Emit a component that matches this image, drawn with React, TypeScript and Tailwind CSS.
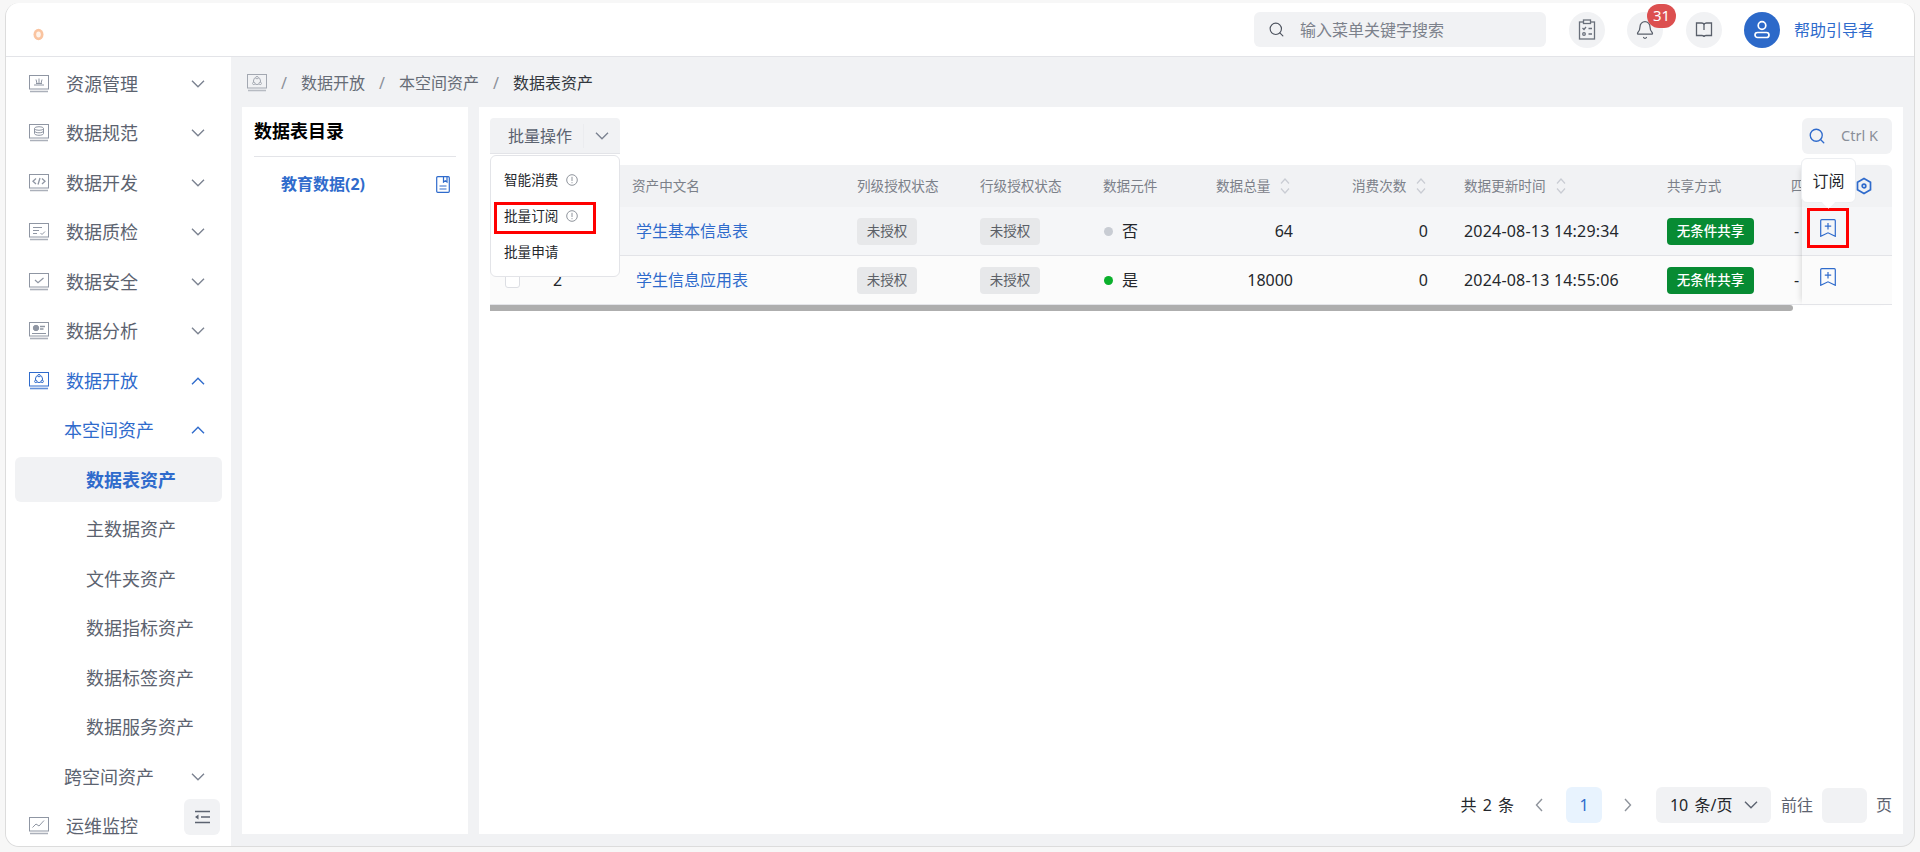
import { Bell, Search } from "lucide-react";

const BLUE = "#2f6bcc";

function Chevron({ up = false, color = "#7d8492" }: { up?: boolean; color?: string }) {
  return (
    <svg width="14" height="8" viewBox="0 0 14 8" fill="none" stroke={color} strokeWidth="1.4">
      <path d={up ? "M1 7.2 7 1.2l6 6" : "M1 .8l6 6 6-6"} />
    </svg>
  );
}

// small monitor shaped menu icons, the inner glyph differs per entry
function NavIcon({ name, color = "#8f96a3" }: { name: string; color?: string }) {
  return (
    <svg width="20" height="20" viewBox="0 0 20 20" fill="none" stroke={color} strokeWidth="1">
      <rect x=".5" y="1.5" width="19" height="13.5" />
      <path d="M1 17.5h18" strokeWidth="1.6" opacity=".75" />
      {name === "res" && <path d="M5 11h10M7 9.5h6M10 4.5v5M7 5.5l1 4M13 5.5l-1 4" />}
      {name === "std" && (
        <>
          <ellipse cx="10" cy="5.5" rx="4.5" ry="1.8" />
          <path d="M5.5 5.5v5c0 1 2 1.8 4.5 1.8s4.5-.8 4.5-1.8v-5M5.5 8c0 1 2 1.8 4.5 1.8s4.500-.8 4.500-1.800" />
        </>
      )}
      {name === "dev" && <path d="M7 5.5 4 8.200l3 2.700M13 5.5l3 2.700-3 2.700M11 5l-2 6.500" strokeWidth="1.3" />}
      {name === "qa" && <path d="M4 5.5h9M4 8.5h6M4 11.5h4M11.5 11l1.5 1.500 3-3" />}
      {name === "sec" && <path d="m6 8 3 2.800L14.500 6" strokeWidth="1.2" />}
      {name === "ana" && (
        <>
          <circle cx="7" cy="7" r="2.7" fill={color} />
          <path d="M11 5.5h5M11 8h3.500" strokeWidth="1.6" />
          <path d="M3 12.5h14" />
        </>
      )}
      {name === "open" && (
        <>
          <circle cx="10" cy="8" r="3.6" />
          <circle cx="10" cy="4.6" r="1.2" fill="#fff" />
          <circle cx="6.8" cy="10.4" r="1.2" fill="#fff" />
          <circle cx="13.2" cy="10.4" r="1.2" fill="#fff" />
        </>
      )}
      {name === "mon" && <path d="m3.5 11.5 3.500-3.500 3 2 5-5.500" />}
    </svg>
  );
}

function NavRow({
  label,
  icon,
  level = 1,
  open,
  active,
  blue,
}: {
  label: string;
  icon?: string;
  level?: number;
  open?: boolean;
  active?: boolean;
  blue?: boolean;
}) {
  const color = blue ? BLUE : "#5c6370";
  return (
    <div
      className={`mb-[4.5px] flex h-[45px] shrink-0 items-center rounded-md pr-[17px] text-[18px] leading-[24px] ${
        active ? "bg-[#f1f2f4] font-bold" : ""
      }`}
      style={{ color }}
    >
      {icon && (
        <span className="ml-[14px] mr-[17px] flex">
          <NavIcon name={icon} color={blue ? BLUE : "#8f96a3"} />
        </span>
      )}
      {level === 2 && <span className="w-[49px]" />}
      {level === 3 && <span className="w-[71px]" />}
      <span className="flex-1 whitespace-nowrap">{label}</span>
      {open !== undefined && <Chevron up={open} color={blue ? BLUE : "#7d8492"} />}
    </div>
  );
}

function SortIcon() {
  return (
    <svg width="10" height="18" viewBox="0 0 10 18" fill="none" stroke="#c9ccd3" strokeWidth="1.2" className="shrink-0">
      <path d="m1 6.5 4-4.500 4 4.500M1 11.500l4 4.500 4-4.500" />
    </svg>
  );
}

function InfoIcon() {
  return (
    <svg width="12" height="12" viewBox="0 0 12 12" fill="none" stroke="#8f949c" strokeWidth="1" className="ml-[8px]">
      <circle cx="6" cy="6" r="5.3" />
      <path d="M6 2.8v4.200M6 8.200v1" />
    </svg>
  );
}

function BookmarkPlus() {
  return (
    <svg width="16" height="18" viewBox="0 0 16 18" fill="none" stroke={BLUE} strokeWidth="1.2" className="-mt-[7px]">
      <path d="M1.700.7h12.600a1 1 0 0 1 1 1v15.600L8 13.800.7 17.300V1.700a1 1 0 0 1 1-1z" />
      <path d="M8 4v6.500M4.800 7.200h6.400" />
    </svg>
  );
}

function Tag({ children }: { children: string }) {
  return (
    <span className="flex h-[27px] w-[60px] items-center justify-center rounded bg-[#e7e8ea] text-[13.5px] text-[#5b5f66]">
      {children}
    </span>
  );
}

function ShareBadge() {
  return (
    <span className="flex h-[27px] w-[87px] items-center justify-center rounded bg-[#078b33] text-[13.5px] font-medium text-white">
      无条件共享
    </span>
  );
}

const rows = [
  { no: "1", name: "学生基本信息表", elem: "否", dot: "bg-[#c8ccd3]", total: "64", used: "0", time: "2024-08-13 14:29:34", bg: "bg-[#f5f6f8]" },
  { no: "2", name: "学生信息应用表", elem: "是", dot: "bg-[#0bb02c]", total: "18000", used: "0", time: "2024-08-13 14:55:06", bg: "bg-[#fbfbfb]" },
];

const crumbs = ["数据开放", "本空间资产"];

export default function App() {
  return (
    <div
      className="h-[852px] w-[1920px] overflow-hidden bg-[#f7f7f7] pl-[5px] pt-[3px] text-[14px]"
      style={{ fontFamily: '"Noto Sans", "Noto Sans CJK SC", sans-serif' }}
    >
      <div className="flex h-[844px] w-[1910px] flex-col overflow-hidden rounded-[14px] border-b border-l border-r border-[#dcdcdc] bg-[#f1f2f4]">
        {/* Top bar */}
        <header className="flex h-[54px] shrink-0 items-center border-b border-[#e3e4e8] bg-white pl-[27px]">
          <svg width="11" height="13" viewBox="0 0 11 13" className="mt-[10px]">
            <ellipse cx="5.5" cy="6.5" rx="5" ry="5.8" fill="#fac4a0" />
            <ellipse cx="5.5" cy="6.5" rx="2.3" ry="3" fill="#fff3ea" />
          </svg>
          <div className="ml-auto flex h-[35px] w-[292px] items-center rounded-md bg-[#f1f2f4] pl-[14px] text-[16px] text-[#7c818b]">
            <Search size={17} strokeWidth={1.6} color="#4d535e" />
            <span className="ml-[15px]">输入菜单关键字搜索</span>
          </div>
          <div className="ml-[23px] flex h-[36px] w-[36px] items-center justify-center rounded-full bg-[#f1f2f4]">
            <svg width="18" height="21" viewBox="0 0 18 21" fill="none" stroke="#6a707b" strokeWidth="1.3">
              <rect x="1.5" y="3" width="15" height="17" />
              <rect x="5.5" y="1" width="7" height="3.5" fill="#f1f2f4" />
              <path d="m4.500 9 1.500 1.500L8 8M10.500 9.500h3.500M10.500 15h3.500" />
              <circle cx="6" cy="15" r="1.3" />
            </svg>
          </div>
          <div className="relative ml-[22px] flex h-[36px] w-[36px] items-center justify-center rounded-full bg-[#f1f2f4]">
            <Bell size={20} strokeWidth={1.5} color="#5a606b" />
            <span className="absolute -top-[8px] left-[20px] flex h-[24px] w-[29px] items-center justify-center rounded-full bg-[#dc4f4f] text-[15px] text-white">
              31
            </span>
          </div>
          <div className="ml-[23px] flex h-[36px] w-[36px] items-center justify-center rounded-full bg-[#f1f2f4]">
            <svg width="18" height="18" viewBox="0 0 18 18" fill="none" stroke="#5a606b" strokeWidth="1.3">
              <path d="M1.500 2h5c1 0 2.500.5 2.500 2 0-1.500 1.500-2 2.500-2h5v12.500H11c-1 0-2 .5-2 1.500 0-1-1-1.500-2-1.500H1.500zM9 4v5" />
            </svg>
          </div>
          <div className="ml-[22px] flex h-[36px] w-[36px] items-center justify-center rounded-full bg-[#2c69c9]">
            <svg width="18" height="19" viewBox="0 0 18 19" fill="none" stroke="#fff" strokeWidth="1.7">
              <circle cx="9" cy="5.5" r="3.8" />
              <rect x="2" y="12.5" width="14" height="5" rx="2.5" />
            </svg>
          </div>
          <span className="ml-[14px] mr-[40px] text-[16px] text-[#2f6bcc]">帮助引导者</span>
        </header>

        <div className="flex min-h-0 flex-1">
          {/* Sidebar */}
          <aside className="relative w-[225px] shrink-0 overflow-hidden bg-white px-[9px] pt-[4px]">
            <NavRow label="资源管理" icon="res" open={false} />
            <NavRow label="数据规范" icon="std" open={false} />
            <NavRow label="数据开发" icon="dev" open={false} />
            <NavRow label="数据质检" icon="qa" open={false} />
            <NavRow label="数据安全" icon="sec" open={false} />
            <NavRow label="数据分析" icon="ana" open={false} />
            <NavRow label="数据开放" icon="open" open blue />
            <NavRow label="本空间资产" level={2} open blue />
            <NavRow label="数据表资产" level={3} active blue />
            <NavRow label="主数据资产" level={3} />
            <NavRow label="文件夹资产" level={3} />
            <NavRow label="数据指标资产" level={3} />
            <NavRow label="数据标签资产" level={3} />
            <NavRow label="数据服务资产" level={3} />
            <NavRow label="跨空间资产" level={2} open={false} />
            <NavRow label="运维监控" icon="mon" />
            <button className="absolute bottom-[11px] left-[178px] flex h-[36px] w-[36px] items-center justify-center rounded-md bg-[#f1f2f4]">
              <svg width="17" height="14" viewBox="0 0 17 14" fill="none" stroke="#5c6370" strokeWidth="1.5">
                <path d="M1 1.5h15M7 7h9M1 12.5h15" />
                <path d="M4.500 4.500v5L1 7z" fill="#5c6370" stroke="none" />
              </svg>
            </button>
          </aside>

          <main className="flex min-w-0 flex-1 flex-col px-[11px]">
            {/* Breadcrumb */}
            <div className="flex h-[50px] shrink-0 items-center pt-[1px] text-[16px] text-[#666c76]">
              <span className="ml-[5px] flex">
                <NavIcon name="open" color="#a3a8b1" />
              </span>
              {crumbs.map((c) => (
                <span key={c} className="flex items-center">
                  <span className="mx-[14px] text-[#8b9099]">/</span>
                  <span>{c}</span>
                </span>
              ))}
              <span className="mx-[14px] text-[#8b9099]">/</span>
              <span className="text-[#33373d]">数据表资产</span>
            </div>

            <div className="flex min-h-0 flex-1 gap-[11px] pb-[12px]">
              {/* Directory panel */}
              <section className="w-[226px] shrink-0 bg-white px-[12px]">
                <div className="flex h-[50px] items-center border-b border-[#e3e4e8] text-[18px] font-bold text-black">
                  数据表目录
                </div>
                <div className="mt-[15px] flex items-center justify-between pl-[27px] pr-[6px] text-[16px] font-bold text-[#2f6bcc]">
                  <span>教育数据(2)</span>
                  <svg width="14" height="17" viewBox="0 0 14 17" fill="none" stroke={BLUE} strokeWidth="1.2">
                    <rect x=".7" y=".7" width="12.6" height="15.6" rx="1" />
                    <path d="M7.500 1v5l1.800-1.300L11 6V1M3.500 10h7M3.500 13h7" />
                  </svg>
                </div>
              </section>

              {/* Table panel */}
              <section className="relative flex min-w-0 flex-1 flex-col bg-white px-[11px] pt-[11px]">
                <div className="flex h-[36px] shrink-0 items-center justify-between">
                  <div className="relative flex h-[36px] w-[130px] items-center rounded-t border-b border-[#e3e4e8] bg-[#f1f2f4] text-[16px] text-[#5c6370]">
                    <span className="ml-[18px] w-[75px]">批量操作</span>
                    <span className="h-[24px] w-px bg-[#ebecef]" />
                    <span className="ml-[11px] flex">
                      <Chevron />
                    </span>
                    <div className="absolute left-0 top-[37px] z-30 flex h-[122px] w-[130px] flex-col justify-center rounded-md border border-[#e3e4e8] bg-white pl-[13px] text-[13.6px] text-[#24272c]">
                      <div className="flex h-[36px] items-center">
                        智能消费
                        <InfoIcon />
                      </div>
                      <div className="flex h-[36px] items-center">
                        批量订阅
                        <InfoIcon />
                      </div>
                      <div className="flex h-[36px] items-center">批量申请</div>
                      <span className="absolute left-[3px] top-[46px] h-[32px] w-[102px] border-[3px] border-[#ff0000]" />
                    </div>
                  </div>
                  <div className="flex h-[36px] w-[90px] items-center rounded-md bg-[#f1f2f4] pl-[6px] text-[14.5px] text-[#8a8f99]">
                    <Search size={18} strokeWidth={1.8} color={BLUE} />
                    <span className="ml-[15px]">Ctrl K</span>
                  </div>
                </div>

                <div className="mt-[11px] flex">
                  {/* Scrolling part of the table */}
                  <div className="w-[1312px] shrink-0 overflow-hidden">
                    <div className="flex h-[42px] w-[1340px] items-center rounded-tl bg-[#f1f2f4] text-[13.6px] text-[#7b8089]">
                      <span className="w-[142px]" />
                      <span className="w-[225px]">资产中文名</span>
                      <span className="w-[123px]">列级授权状态</span>
                      <span className="w-[123px]">行级授权状态</span>
                      <span className="w-[113px]">数据元件</span>
                      <span className="flex w-[84px] items-center gap-[10px]">
                        数据总量
                        <SortIcon />
                      </span>
                      <span className="ml-[52px] flex w-[84px] items-center gap-[10px]">
                        消费次数
                        <SortIcon />
                      </span>
                      <span className="ml-[28px] flex w-[203px] items-center gap-[10px]">
                        数据更新时间
                        <SortIcon />
                      </span>
                      <span className="w-[124px]">共享方式</span>
                      <span>四</span>
                    </div>
                    {rows.map((r) => (
                      <div
                        key={r.no}
                        className={`flex h-[49px] w-[1340px] items-center border-b border-[#e3e4e8] text-[16px] text-[#24272c] ${r.bg}`}
                      >
                        <span className="flex w-[50px] pl-[15px]">
                          <span className="h-[15px] w-[15px] rounded-[3px] border border-[#dcdee3] bg-white" />
                        </span>
                        <span className="w-[92px] pl-[13px]">{r.no}</span>
                        <span className="w-[225px] pl-[4px] text-[#2f6bcc]">{r.name}</span>
                        <span className="w-[123px]">
                          <Tag>未授权</Tag>
                        </span>
                        <span className="w-[123px]">
                          <Tag>未授权</Tag>
                        </span>
                        <span className="flex w-[97px] items-center">
                          <span className={`ml-[1px] h-[9px] w-[9px] rounded-full ${r.dot}`} />
                          <span className="ml-[9px]">{r.elem}</span>
                        </span>
                        <span className="w-[93px] text-right">{r.total}</span>
                        <span className="w-[135px] text-right">{r.used}</span>
                        <span className="ml-[36px] w-[203px] whitespace-nowrap tracking-[0.2px]">{r.time}</span>
                        <span className="w-[124px]">
                          <ShareBadge />
                        </span>
                        <span className="pl-[3px]">-</span>
                      </div>
                    ))}
                    <div className="h-[6px] w-[1303px] rounded-r-full bg-[#aeaeae]" />
                  </div>

                  {/* Fixed operation column */}
                  <div className="relative z-20 w-[90px] shrink-0 self-start shadow-[-5px_0_6px_-4px_rgba(0,0,0,0.14)]">
                    <div className="flex h-[42px] items-center justify-end rounded-tr-md bg-[#f1f2f4] pr-[20px]">
                      <svg width="16" height="18" viewBox="0 0 16 18" fill="none" stroke={BLUE} strokeWidth="1.7">
                        <path d="M8 1.500 14.500 5.200v7.600L8 16.500l-6.500-3.700V5.200z" />
                        <circle cx="8" cy="9" r="1.8" />
                      </svg>
                    </div>
                    {rows.map((r) => (
                      <div key={r.no} className={`flex h-[49px] items-center border-b border-[#e3e4e8] pl-[18px] ${r.bg}`}>
                        <BookmarkPlus />
                      </div>
                    ))}
                    <div className="absolute -left-[1px] -top-[7px] z-30 flex h-[45px] w-[55px] items-center justify-center rounded-md border border-[#eceef1] bg-white text-[16px] text-[#24272c]">
                      订阅
                      <span className="absolute -bottom-[5px] left-[22px] h-[9px] w-[9px] rotate-45 bg-white" />
                    </div>
                    <span className="absolute left-[5px] top-[43px] h-[40px] w-[42px] border-[3px] border-[#ff0000]" />
                  </div>
                </div>

                {/* Pagination */}
                <div className="absolute bottom-[11px] right-[11px] flex h-[36px] items-center text-[16px] text-[#24272c]">
                  <span className="[word-spacing:2px]">共 2 条</span>
                  <span className="ml-[20px] flex w-[10px] justify-center">
                    <svg width="8" height="14" viewBox="0 0 8 14" fill="none" stroke="#8f949c" strokeWidth="1.4">
                      <path d="M7 1 1.500 7 7 13" />
                    </svg>
                  </span>
                  <span className="ml-[22px] flex h-[36px] w-[36px] items-center justify-center rounded-md bg-[#e8f3fe] text-[#2f6bcc]">1</span>
                  <span className="ml-[21px] flex w-[10px] justify-center">
                    <svg width="8" height="14" viewBox="0 0 8 14" fill="none" stroke="#8f949c" strokeWidth="1.4">
                      <path d="M1 1l5.500 6L1 13" />
                    </svg>
                  </span>
                  <span className="ml-[23px] flex h-[36px] w-[115px] items-center rounded-md bg-[#f1f2f4] pl-[14px]">
                    <span className="w-[74px] whitespace-nowrap [word-spacing:2px]">10 条/页</span>
                    <Chevron color="#5c6370" />
                  </span>
                  <span className="ml-[10px] text-[#5c6370]">前往</span>
                  <span className="ml-[9px] h-[35px] w-[45px] rounded-md bg-[#f1f2f4]" />
                  <span className="ml-[9px] text-[#5c6370]">页</span>
                </div>
              </section>
            </div>
          </main>
        </div>
      </div>
    </div>
  );
}
